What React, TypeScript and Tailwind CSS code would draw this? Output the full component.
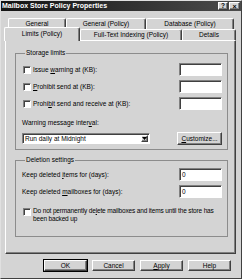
import type { ReactNode } from 'react'

const raised =
  'border border-t-white border-l-white border-r-[#404040] border-b-[#404040] shadow-[inset_-1px_-1px_0_#808080]'
const sunken =
  'border border-t-[#808080] border-l-[#808080] border-r-white border-b-white shadow-[inset_1px_1px_0_#404040] bg-white'

function Field({ value = '' }: { value?: string }) {
  return (
    <div className={`${sunken} w-[43px] h-[13px] pl-[2px] leading-[11px]`}>{value}</div>
  )
}

function Check() {
  return <div className={`${sunken} w-[8px] h-[8px] shrink-0 ml-[1px]`} />
}

function Key({ children }: { children: ReactNode }) {
  return <span className="underline underline-offset-1">{children}</span>
}

function CheckRow({ children }: { children: ReactNode }) {
  return (
    <div className="flex items-center justify-between h-[13px]">
      <div className="flex items-center gap-[2px]">
        <Check />
        <span>{children}</span>
      </div>
      <Field />
    </div>
  )
}

function Tab({ label, w, active = false }: { label: string; w: number; active?: boolean }) {
  return (
    <div
      style={{ width: w }}
      className={`border-t border-l border-r border-t-white border-l-white border-r-[#404040] rounded-t-[2px] shadow-[inset_-1px_0_0_#808080] text-center whitespace-nowrap ${
        active ? 'relative z-10 h-[14px] -mt-[2px] -mb-[1px] bg-[#d4d4d4] leading-[12px]' : 'h-[11px] leading-[10px]'
      }`}
    >
      {label}
    </div>
  )
}

function Button({ children, main = false }: { children: ReactNode; main?: boolean }) {
  return (
    <div className={main ? 'border border-black' : 'p-[1px]'}>
      <div className={`${raised} w-[43px] h-[11px] flex items-center justify-center`}>{children}</div>
    </div>
  )
}

export default function App() {
  return (
    <div className="w-[242px] h-[279px] bg-[#d4d4d4] text-black text-[6.5px] font-['Liberation_Sans',Arial,sans-serif] border border-t-[#e0e0e0] border-l-[#e0e0e0] border-r-[#404040] border-b-[#404040] overflow-hidden">
      <div className="h-[10px] bg-gradient-to-r from-[#141414] to-[#4c4c4c] flex items-center justify-between pl-[1px] pr-[1px]">
        <span className="text-white font-bold text-[7px] leading-[10px]">Mailbox Store Policy Properties</span>
        <div className="flex gap-[1px]">
          <div className={`${raised} bg-[#d4d4d4] w-[10px] h-[8px] flex items-center justify-center font-bold text-[6.5px] leading-none`}>?</div>
          <div className={`${raised} bg-[#d4d4d4] w-[11px] h-[8px] flex items-center justify-center font-bold text-[7px] leading-none`}>×</div>
        </div>
      </div>

      <div className="mt-[7px] flex ml-[7px]">
        <Tab label="General" w={58} />
        <Tab label="General (Policy)" w={80} />
        <Tab label="Database (Policy)" w={88} />
      </div>
      <div className="flex ml-[3px] h-[11px]">
        <Tab label="Limits (Policy)" w={76} active />
        <Tab label="Full-Text Indexing (Policy)" w={102} />
        <Tab label="Details" w={54} />
      </div>

      <div className={`${raised} ml-[4px] w-[231px] h-[214px] pt-[8px] pl-[9px] pr-[7px]`}>
        <fieldset className="border border-[#8c8c8c] pl-[6px] pr-[5px] pb-[4px]">
          <legend className="ml-[3px] px-[1px] leading-[8px]">Storage limits</legend>
          <div className="mt-[6px] flex flex-col gap-[4px]">
            <CheckRow>
              Issue <Key>w</Key>arning at (KB):
            </CheckRow>
            <CheckRow>
              <Key>P</Key>rohibit send at (KB):
            </CheckRow>
            <CheckRow>
              Prohi<Key>b</Key>it send and receive at (KB):
            </CheckRow>
          </div>
          <div className="mt-[9px] leading-[8px]">
            Warning message inter<Key>v</Key>al:
          </div>
          <div className="mt-[5px] flex items-center justify-between h-[13px]">
            <div className={`${sunken} w-[128px] h-[11px] flex items-center justify-between pl-[2px] pr-[1px]`}>
              <span className="leading-[9px]">Run daily at Midnight</span>
              <div className={`${raised} bg-[#d4d4d4] w-[7px] h-[7px] flex items-center justify-center`}>
                <svg width="5" height="3" viewBox="0 0 5 3">
                  <path d="M0 0h5L2.5 3z" fill="#000" />
                </svg>
              </div>
            </div>
            <div className={`${raised} w-[45px] h-[13px] flex items-center justify-center`}>
              <span>
                <Key>C</Key>ustomize...
              </span>
            </div>
          </div>
        </fieldset>

        <fieldset className="mt-[6px] border border-[#8c8c8c] pl-[6px] pr-[3px] pb-[13px]">
          <legend className="ml-[3px] px-[1px] leading-[8px]">Deletion settings</legend>
          <div className="mt-[4px] mr-[2px] flex flex-col gap-[4px]">
            <div className="flex items-center justify-between h-[13px]">
              <span>
                Keep deleted <Key>i</Key>tems for (days):
              </span>
              <Field value="0" />
            </div>
            <div className="flex items-center justify-between h-[13px]">
              <span>
                Keep deleted <Key>m</Key>ailboxes for (days):
              </span>
              <Field value="0" />
            </div>
          </div>
          <div className="mt-[9px] flex items-start gap-[2px]">
            <div className="mt-[1px]">
              <Check />
            </div>
            <span className="leading-[8px] whitespace-nowrap tracking-[-0.15px]">
              Do not permanently de<Key>l</Key>ete mailboxes and items until the store has
              <br />
              been backed up
            </span>
          </div>
        </fieldset>
      </div>

      <div className="mt-[5px] flex justify-end gap-[3px] pr-[9px]">
        <Button main>OK</Button>
        <Button>Cancel</Button>
        <Button>
          <span>
            <Key>A</Key>pply
          </span>
        </Button>
        <Button>Help</Button>
      </div>
    </div>
  )
}
